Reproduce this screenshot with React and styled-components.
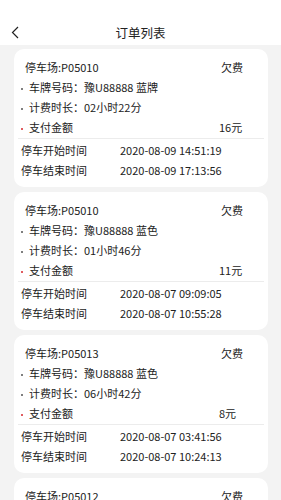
import React from 'react';
import styled, { createGlobalStyle } from 'styled-components';

const GlobalStyle = createGlobalStyle`
  html, body {
    margin: 0;
    padding: 0;
    background-color: #f3f3f3;
  }
  body {
    font-family: "Noto Sans CJK SC", "Noto Sans", sans-serif;
    color: #222;
  }
`;

const Page = styled.div`
  width: 281px;
  min-height: 500px;
  background-color: #f3f3f3;
`;

const Header = styled.div`
  height: 45px;
  background-color: #fff;
  padding-top: 20px;
  box-sizing: border-box;
  display: flex;
  align-items: center;
  justify-content: center;
  position: relative;
`;

const BackButton = styled.div`
  position: absolute;
  left: 11px;
  top: 26px;
  width: 9px;
  height: 13px;
  display: flex;
`;

const Title = styled.div`
  font-size: 12.5px;
  line-height: 25px;
  color: #222;
`;

const List = styled.div`
  display: flex;
  flex-direction: column;
  gap: 5px;
  padding: 4px 13px 0 14px;
`;

const Card = styled.div`
  background-color: #fff;
  border-radius: 10px;
  padding: 8px 0 7px;
  font-size: 11px;
`;

const Line = styled.div`
  display: flex;
  align-items: center;
  justify-content: space-between;
  height: 20px;
  line-height: 20px;
  padding: 0 ${(p) => p.$right || 0}px 0 ${(p) => p.$left || 0}px;
  white-space: nowrap;
`;

const Bullet = styled.span`
  display: inline-block;
  width: 2px;
  height: 2px;
  border-radius: 1px;
  background-color: ${(p) => (p.$red ? '#d6262b' : '#555')};
  margin-right: 6px;
  vertical-align: middle;
`;

const Amount = styled.span`
  width: 27px;
  text-align: left;
`;

const Divider = styled.div`
  height: 1px;
  background-color: #ececec;
  margin: 1px 4px 1px;
`;

const TimeRow = styled.div`
  display: grid;
  grid-template-columns: 99px 1fr;
  height: 20px;
  line-height: 20px;
  padding-left: 7px;
  white-space: nowrap;
`;

const orders = [
  { lot: 'P05010', plate: '豫U88888 蓝牌', dur: '02小时22分', amount: '16元', start: '2020-08-09 14:51:19', end: '2020-08-09 17:13:56' },
  { lot: 'P05010', plate: '豫U88888 蓝色', dur: '01小时46分', amount: '11元', start: '2020-08-07 09:09:05', end: '2020-08-07 10:55:28' },
  { lot: 'P05013', plate: '豫U88888 蓝色', dur: '06小时42分', amount: '8元', start: '2020-08-07 03:41:56', end: '2020-08-07 10:24:13' },
  { lot: 'P05012', plate: '豫U88888 蓝色', dur: '03小时12分', amount: '9元', start: '2020-08-06 08:11:36', end: '2020-08-06 11:23:40' },
];

const OrderCard = ({ order }) => (
  <Card>
    <Line $left={11} $right={25}>
      <span>停车场:{order.lot}</span>
      <span>欠费</span>
    </Line>
    <Line $left={7}>
      <span><Bullet />车牌号码：{order.plate}</span>
    </Line>
    <Line $left={7}>
      <span><Bullet />计费时长：{order.dur}</span>
    </Line>
    <Line $left={7} $right={22}>
      <span><Bullet $red />支付金额</span>
      <Amount>{order.amount}</Amount>
    </Line>
    <Divider />
    <TimeRow>
      <span>停车开始时间</span>
      <span>{order.start}</span>
    </TimeRow>
    <TimeRow>
      <span>停车结束时间</span>
      <span>{order.end}</span>
    </TimeRow>
  </Card>
);

const App = () => {
  return (
    <Page>
      <GlobalStyle />
      <Header>
        <BackButton>
          <svg width="9" height="13" viewBox="0 0 9 13">
            <path d="M7 1 L1.5 6.5 L7 12" fill="none" stroke="#222" strokeWidth="1.2" />
          </svg>
        </BackButton>
        <Title>订单列表</Title>
      </Header>
      <List>
        {orders.map((o, i) => (
          <OrderCard key={i} order={o} />
        ))}
      </List>
    </Page>
  );
};

export default App;
